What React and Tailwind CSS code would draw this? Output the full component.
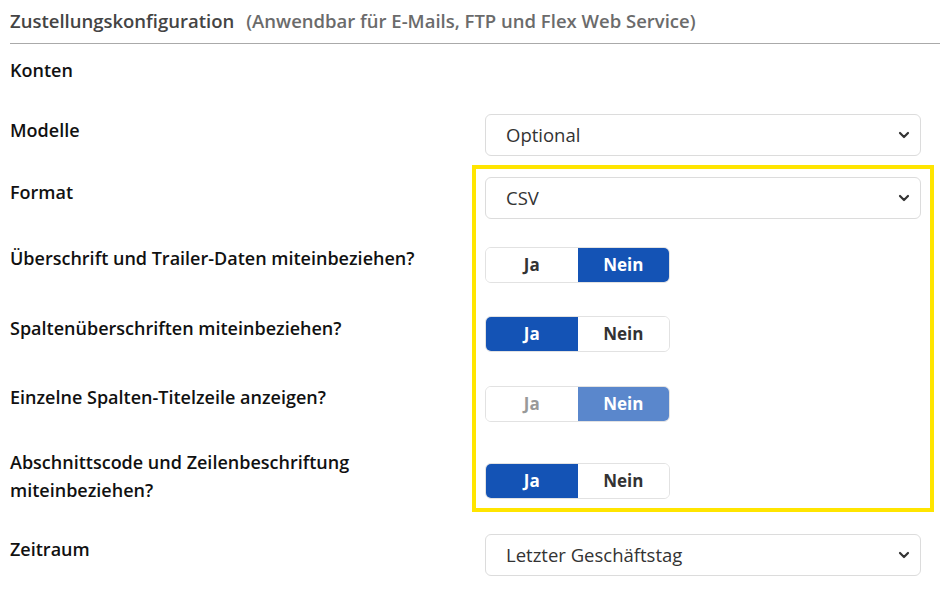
import React from 'react';

function Chevron() {
  return (
    <svg className="h-4 w-4 text-[#333]" viewBox="0 0 16 16" fill="none" stroke="currentColor" strokeWidth="2.2" strokeLinecap="round" strokeLinejoin="round">
      <path d="M4 6l4 4 4-4" />
    </svg>
  );
}

function Select({ value }) {
  return (
    <div className="flex h-[42px] w-[436px] items-center justify-between rounded-md border border-[#dcdcdc] bg-white pl-[20px] pr-[8px]">
      <span className="text-[18.5px] text-[#333]">{value}</span>
      <Chevron />
    </div>
  );
}

function Toggle({ yes, disabled }) {
  const on = disabled ? 'bg-[#5a87cc] text-white' : 'bg-[#1453b5] text-white';
  const off = disabled ? 'bg-white text-[#999]' : 'bg-white text-[#333]';
  return (
    <div className="flex h-[36px] w-[185px] overflow-hidden rounded-md border border-[#e2e2e2] text-[17px] font-bold">
      <div className={`flex w-1/2 items-center justify-center ${yes ? on : off}`}>Ja</div>
      <div className={`flex w-1/2 items-center justify-center ${yes ? off : on}`}>Nein</div>
    </div>
  );
}

function Row({ label, offset, children, className }) {
  return (
    <div className={`flex items-start ${className}`}>
      <div className={`w-[475px] pr-4 text-[18px] font-semibold leading-[28px] text-[#111] ${offset}`}>{label}</div>
      {children}
    </div>
  );
}

export default function App() {
  return (
    <div className="relative h-[594px] w-[940px] overflow-hidden bg-white font-['Open_Sans',sans-serif]">
      <div className="pl-[10px]">
        <div className="flex h-[43px] items-center gap-[12px] pb-[2px] text-[18.5px] font-semibold">
          <span className="text-[#444]">Zustellungskonfiguration</span>
          <span className="text-[#6b6b6b]">(Anwendbar für E-Mails, FTP und Flex Web Service)</span>
        </div>
        <div className="h-px bg-[#aaa]" />

        <div className="pt-[12px] text-[18px] font-semibold leading-[28px] text-[#111]">Konten</div>

        <Row label="Modelle" offset="pt-[2px]" className="mt-[30px]">
          <Select value="Optional" />
        </Row>
        <Row label="Format" offset="pt-[1px]" className="mt-[21px]">
          <Select value="CSV" />
        </Row>
        <Row label="Überschrift und Trailer-Daten miteinbeziehen?" offset="-mt-[3px]" className="mt-[28px]">
          <Toggle yes={false} />
        </Row>
        <Row label="Spaltenüberschriften miteinbeziehen?" offset="-mt-[2px]" className="mt-[33px]">
          <Toggle yes />
        </Row>
        <Row label="Einzelne Spalten-Titelzeile anzeigen?" offset="-mt-[3px]" className="mt-[34px]">
          <Toggle yes={false} disabled />
        </Row>
        <Row label={<>Abschnittscode und Zeilenbeschriftung<br />miteinbeziehen?</>} offset="-mt-[15px] -mb-[5px]" className="mt-[41px]">
          <Toggle yes />
        </Row>
        <Row label="Zeitraum" offset="pt-[1px]" className="mt-[35px]">
          <Select value="Letzter Geschäftstag" />
        </Row>
      </div>

      <div className="pointer-events-none absolute left-[472px] top-[165px] h-[347px] w-[462px] border-[4px] border-[#ffe500]" />
    </div>
  );
}
